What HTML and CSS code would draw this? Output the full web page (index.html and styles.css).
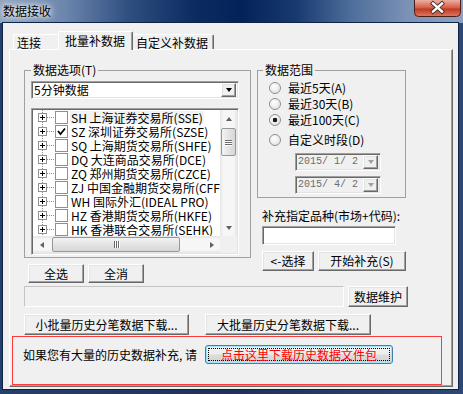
FILE: index.html
```html
<!DOCTYPE html>
<html>
<head>
<meta charset="utf-8">
<link rel="stylesheet" href="styles.css">
</head>
<body>
<div class="window">
  <div class="titlebar">
    <span class="title">数据接收</span>
    <div class="close">
      <svg width="47" height="17" viewBox="0 0 47 17">
        <defs>
          <linearGradient id="cg" x1="0" y1="0" x2="0" y2="1">
            <stop offset="0" stop-color="#ebb0a3"/>
            <stop offset="0.45" stop-color="#d6604b"/>
            <stop offset="0.55" stop-color="#c23a22"/>
            <stop offset="1" stop-color="#db7a60"/>
          </linearGradient>
        </defs>
        <path d="M0.5 0 V12.5 Q0.5 16.5 4.5 16.5 H42.5 Q46.5 16.5 46.5 12.5 V0" fill="url(#cg)" stroke="#4a1f1a" stroke-width="1"/>
        <path d="M19 3.5 L28 11.5 M28 3.5 L19 11.5" stroke="#3a2a2a" stroke-width="4.2" stroke-linecap="square"/>
        <path d="M19 3.5 L28 11.5 M28 3.5 L19 11.5" stroke="#ffffff" stroke-width="2.4" stroke-linecap="square"/>
      </svg>
    </div>
  </div>
  <div class="client">
    <div class="tabs">
      <div class="tab t1">连接</div>
      <div class="tab sel">批量补数据</div>
      <div class="tab t3">自定义补数据</div>
    </div>
    <div class="panel">
      <div class="cols">
        <div class="lcol">
          <fieldset class="grp g-left">
            <legend>数据选项(T)</legend>
            <div class="combo sunken">
              <span class="ctext">5分钟数据</span>
              <span class="dd raised"><i class="tri"></i></span>
            </div>
            <div class="list sunken">
              <div class="items">
                <div class="row"><span class="plus"></span><span class="dots"></span><span class="cb"></span><span class="txt hl">SH 上海证券交易所(SSE)</span></div>
                <div class="row"><span class="plus"></span><span class="dots"></span><span class="cb on"><svg width="11" height="11" viewBox="0 0 11 11"><path d="M2 5 L4.5 8 L9 2.5" fill="none" stroke="#000" stroke-width="1.8"/></svg></span><span class="txt">SZ 深圳证券交易所(SZSE)</span></div>
                <div class="row"><span class="plus"></span><span class="dots"></span><span class="cb"></span><span class="txt">SQ 上海期货交易所(SHFE)</span></div>
                <div class="row"><span class="plus"></span><span class="dots"></span><span class="cb"></span><span class="txt">DQ 大连商品交易所(DCE)</span></div>
                <div class="row"><span class="plus"></span><span class="dots"></span><span class="cb"></span><span class="txt">ZQ 郑州期货交易所(CZCE)</span></div>
                <div class="row"><span class="plus"></span><span class="dots"></span><span class="cb"></span><span class="txt">ZJ 中国金融期货交易所(CFFEX)</span></div>
                <div class="row"><span class="plus"></span><span class="dots"></span><span class="cb"></span><span class="txt">WH 国际外汇(IDEAL PRO)</span></div>
                <div class="row"><span class="plus"></span><span class="dots"></span><span class="cb"></span><span class="txt">HZ 香港期货交易所(HKFE)</span></div>
                <div class="row"><span class="plus"></span><span class="dots"></span><span class="cb"></span><span class="txt">HK 香港联合交易所(SEHK)</span></div>
              </div>
              <div class="vscroll">
                <span class="sbtn"><i class="au"></i></span>
                <span class="vthumb"><i></i><i></i><i></i></span>
                <span class="sbtn bottom"><i class="ad"></i></span>
              </div>
              <div class="hscroll">
                <span class="sbtn"><i class="al"></i></span>
                <span class="hthumb"><i></i><i></i><i></i></span>
                <span class="sbtn right"><i class="ar"></i></span>
              </div>
              <div class="corner"></div>
            </div>
          </fieldset>
          <div class="btnrow">
            <button class="btn raised w56">全选</button>
            <button class="btn raised w56">全消</button>
          </div>
        </div>
        <div class="rcol">
          <fieldset class="grp g-right">
            <legend>数据范围</legend>
            <div class="radio"><span class="rb"></span>最近5天(A)</div>
            <div class="radio"><span class="rb"></span>最近30天(B)</div>
            <div class="radio"><span class="rb on"></span>最近100天(C)</div>
            <div class="radio last"><span class="rb"></span>自定义时段(D)</div>
            <div class="date sunken"><span class="dtext">2015/ 1/ 2</span><span class="dd raised"><i class="tri gray"></i></span></div>
            <div class="date sunken"><span class="dtext">2015/ 4/ 2</span><span class="dd raised"><i class="tri gray"></i></span></div>
          </fieldset>
          <div class="lbl">补充指定品种(市场+代码):</div>
          <div class="input sunken"></div>
          <div class="btnrow2">
            <button class="btn raised w52">&lt;-选择</button>
            <button class="btn raised w88">开始补充(S)</button>
          </div>
        </div>
      </div>
      <div class="row2">
        <div class="progress"></div>
        <button class="btn raised w60">数据维护</button>
      </div>
      <div class="row3">
        <button class="btn raised w165">小批量历史分笔数据下载...</button>
        <button class="btn raised w166">大批量历史分笔数据下载...</button>
      </div>
      <div class="redbox">
        <span class="hint">如果您有大量的历史数据补充, 请</span>
        <button class="dl"><span>点击这里下载历史数据文件包</span></button>
      </div>
    </div>
  </div>
</div>
</body>
</html>
```

FILE: styles.css
```css
* { box-sizing: border-box; }
html, body { margin: 0; padding: 0; }
body {
  width: 463px; height: 394px; overflow: hidden;
  font-family: "Noto Sans CJK SC", "Noto Sans", sans-serif;
  font-size: 12px; line-height: 14px; color: #000;
  background: #1c3359;
}
.window {
  width: 463px; height: 394px;
  display: flex; flex-direction: column;
  background: linear-gradient(90deg, #24406c, #1c3359 50%, #2c4874);
}
.titlebar {
  height: 23px; display: flex; align-items: flex-start;
  background: linear-gradient(90deg, #8ea2bf 0%, #6c86ac 14%, #2e4e80 28%, #0c2c60 42%, #04225a 52%, #173a6f 64%, #4f6e9b 76%, #7a92b5 88%, #8da1bf 100%);
}
.title {
  margin: 4px 0 0 3px; line-height: 13px;
  text-shadow: 0 0 4px #fff, 0 0 8px rgba(255,255,255,.85), 0 0 12px rgba(255,255,255,.6);
}
.close { margin-left: auto; margin-right: 2px; width: 47px; height: 17px; }
.close svg { display: block; }

.client {
  margin: 0 5px 0 3px; height: 366px;
  background: #f0f0f0;
  box-shadow: 0 0 0 1px #0e2347;
}
.tabs { height: 26px; display: flex; align-items: flex-end; padding-left: 10px; }
.tab {
  height: 15px; padding-top: 1px;
  border: 1px solid; border-bottom: 0;
  border-color: #fff #696969 #fff #fff;
  border-radius: 2px 2px 0 0;
  background: #f0f0f0; white-space: nowrap;
}
.t1 { width: 45px; padding-left: 3px; border-right: 0; }
.sel {
  width: 75px; height: 19px; padding-top: 2px; padding-left: 6px;
  margin-bottom: -1px; position: relative; z-index: 2;
  box-shadow: inset -1px 0 0 #a0a0a0;
}
.t3 { width: 81px; padding-left: 3px; box-shadow: inset -1px 0 0 #a0a0a0; border-left: 0; }

.panel {
  margin-left: 6px; width: 444px; height: 338px;
  border: 1px solid; border-color: #fff #696969 #696969 #fff;
  box-shadow: inset -1px -1px 0 #a0a0a0;
  padding: 13px 0 0 14px;
}
.cols { display: flex; gap: 6px; align-items: flex-start; }

.grp { margin: 0; border: 1px solid #a0a0a0; min-width: 0; }
.grp legend { padding: 0 2px; line-height: 14px; }
.g-left { width: 227px; padding: 4px 5px 2px 6px; }
.g-right { width: 149px; padding: 3px 5px 3px 5px; }

.sunken {
  border: 1px solid; border-color: #a0a0a0 #fff #fff #a0a0a0;
  box-shadow: inset 1px 1px 0 #696969, inset -1px -1px 0 #e3e3e3;
}
.raised {
  background: #f0f0f0;
  border: 1px solid; border-color: #fff #696969 #696969 #fff;
  box-shadow: inset -1px -1px 0 #a0a0a0, inset 1px 1px 0 #e3e3e3;
}
.combo {
  width: 208px; height: 18px; background: #fff;
  display: flex; align-items: center; padding: 1px 2px 1px 1px;
}
.ctext { flex: 1; padding-left: 1px; }
.dd { width: 15px; height: 14px; display: flex; align-items: center; justify-content: center; }
.tri { width: 0; height: 0; border-left: 3.5px solid transparent; border-right: 3.5px solid transparent; border-top: 4px solid #000; }
.tri.gray { border-top-color: #a0a0a0; }

.list {
  margin-top: 9px; width: 208px; height: 147px; background: #fff; padding: 1px;
  display: grid; grid-template-columns: 1fr 17px; grid-template-rows: 1fr 17px;
}
.items {
  overflow: hidden; padding-top: 0;
  background: linear-gradient(#8a8a8a 50%, transparent 50%) 9px 0 / 1px 2px repeat-y;
}
.row { height: 14px; display: flex; align-items: center; white-space: nowrap; }
.plus {
  margin-left: 5px; width: 9px; height: 9px; flex: none;
  border: 1px solid #919191;
  background: linear-gradient(#000, #000) center / 5px 1px no-repeat,
              linear-gradient(#000, #000) center / 1px 5px no-repeat, #fff;
}
.dots {
  width: 8px; height: 1px; flex: none;
  background: linear-gradient(90deg, #8a8a8a 50%, transparent 50%) 0 0 / 2px 1px repeat-x;
}
.cb {
  width: 13px; height: 13px; flex: none; border: 1px solid #8e8f8f; background: #fff;
  display: flex; align-items: center; justify-content: center;
}
.cb svg { display: block; }
.txt { margin-left: 2px; padding: 0 1px; line-height: 13px; }
.txt.hl { background: #f2f2f2; }

.vscroll {
  display: flex; flex-direction: column; align-items: center;
  background: linear-gradient(90deg, #e6e6e6, #f6f6f6 20%, #f6f6f6 80%, #e6e6e6);
}
.hscroll {
  display: flex; align-items: center;
  background: linear-gradient(#e6e6e6, #f6f6f6 20%, #f6f6f6 80%, #e6e6e6);
}
.corner { background: #f0f0f0; }
.sbtn { width: 17px; height: 17px; flex: none; display: flex; align-items: center; justify-content: center; }
.sbtn.bottom { margin-top: auto; }
.sbtn.right { margin-left: auto; }
.au { width: 0; height: 0; border-left: 3.5px solid transparent; border-right: 3.5px solid transparent; border-bottom: 4px solid #606060; }
.ad { width: 0; height: 0; border-left: 3.5px solid transparent; border-right: 3.5px solid transparent; border-top: 4px solid #606060; }
.al { width: 0; height: 0; border-top: 3.5px solid transparent; border-bottom: 3.5px solid transparent; border-right: 4px solid #606060; }
.ar { width: 0; height: 0; border-top: 3.5px solid transparent; border-bottom: 3.5px solid transparent; border-left: 4px solid #606060; }
.vthumb {
  margin-top: 1px; width: 15px; height: 28px;
  border: 1px solid #979797; border-radius: 2px;
  background: linear-gradient(90deg, #f4f4f4, #e4e4e4 50%, #d6d6d6);
  display: flex; flex-direction: column; align-items: center; justify-content: center; gap: 1px;
}
.vthumb i { width: 7px; height: 1px; background: #6a6a6a; box-shadow: 0 1px 0 #fff; }
.hthumb {
  margin-left: 2px; width: 128px; height: 15px;
  border: 1px solid #979797; border-radius: 2px;
  background: linear-gradient(#f4f4f4, #e4e4e4 50%, #d6d6d6);
  display: flex; align-items: center; justify-content: center; gap: 1px;
}
.hthumb i { width: 1px; height: 7px; background: #6a6a6a; box-shadow: 1px 0 0 #fff; }

.btn {
  font: inherit; line-height: 14px; color: #000; padding: 0; margin: 0;
  display: flex; align-items: center; justify-content: center; white-space: nowrap;
}
.btnrow { display: flex; gap: 4px; margin-top: 6px; padding-left: 4px; }
.w56 { width: 56px; height: 19px; }
.w52 { width: 52px; height: 20px; }
.w88 { width: 88px; height: 20px; }
.w60 { width: 60px; height: 21px; }
.w165 { width: 165px; height: 21px; }
.w166 { width: 166px; height: 21px; }

.radio { height: 16px; display: flex; align-items: center; padding-left: 6px; white-space: nowrap; }
.radio.last { margin-top: 4px; }
.rb {
  width: 12px; height: 12px; border-radius: 50%; flex: none; margin-right: 7px;
  border: 1px solid #8e8f8f;
  background: radial-gradient(circle at 40% 35%, #ffffff, #dcdcdc);
}
.rb.on {
  background: radial-gradient(circle, #1a1a1a 0 2px, transparent 2.6px),
              radial-gradient(circle at 40% 35%, #ffffff, #dcdcdc);
}
.date {
  margin: 5px 0 0 32px; width: 86px; height: 18px;
  background: #f0f0f0; color: #6d6d6d;
  display: flex; align-items: center; padding: 1px 2px 1px 2px;
}
.date + .date { margin-top: 5px; }
.dtext { flex: 1; white-space: pre; font-family: "Liberation Mono", monospace; font-size: 10px; }

.lbl { margin-top: 11px; padding-left: 5px; white-space: nowrap; }
.input { margin: 3px 0 0 5px; width: 134px; height: 19px; background: #fff; }
.btnrow2 { display: flex; gap: 4px; margin-top: 6px; padding-left: 5px; }

.row2 { display: flex; gap: 4px; margin-top: 3px; }
.progress {
  width: 320px; height: 21px;
  border: 1px solid; border-color: #c4c4c4 #fff #fff #c4c4c4;
  background: #f0f0f0;
}
.row3 { display: flex; gap: 16px; margin-top: 7px; }

.redbox {
  margin: 1px 0 0 -12px; width: 430px; height: 49px;
  border: 1px solid #ff3a3a;
  display: flex; align-items: flex-start; padding: 8px 0 0 10px;
}
.hint { width: 182px; height: 19px; display: flex; align-items: center; white-space: nowrap; }
.dl {
  font: inherit; margin: 0; width: 188px; height: 19px; padding: 2px;
  border: 1px solid #3c7fb1; border-radius: 3px;
  box-shadow: inset 0 0 0 1px #a6e4fb;
  background: linear-gradient(#f3f3f3 0%, #ececec 48%, #dddddd 52%, #d2d2d2 100%);
  color: #ff0000;
}
.dl span {
  display: block; height: 13px; line-height: 12px;
  border: 1px dotted #000; white-space: nowrap; text-align: center;
}
```
